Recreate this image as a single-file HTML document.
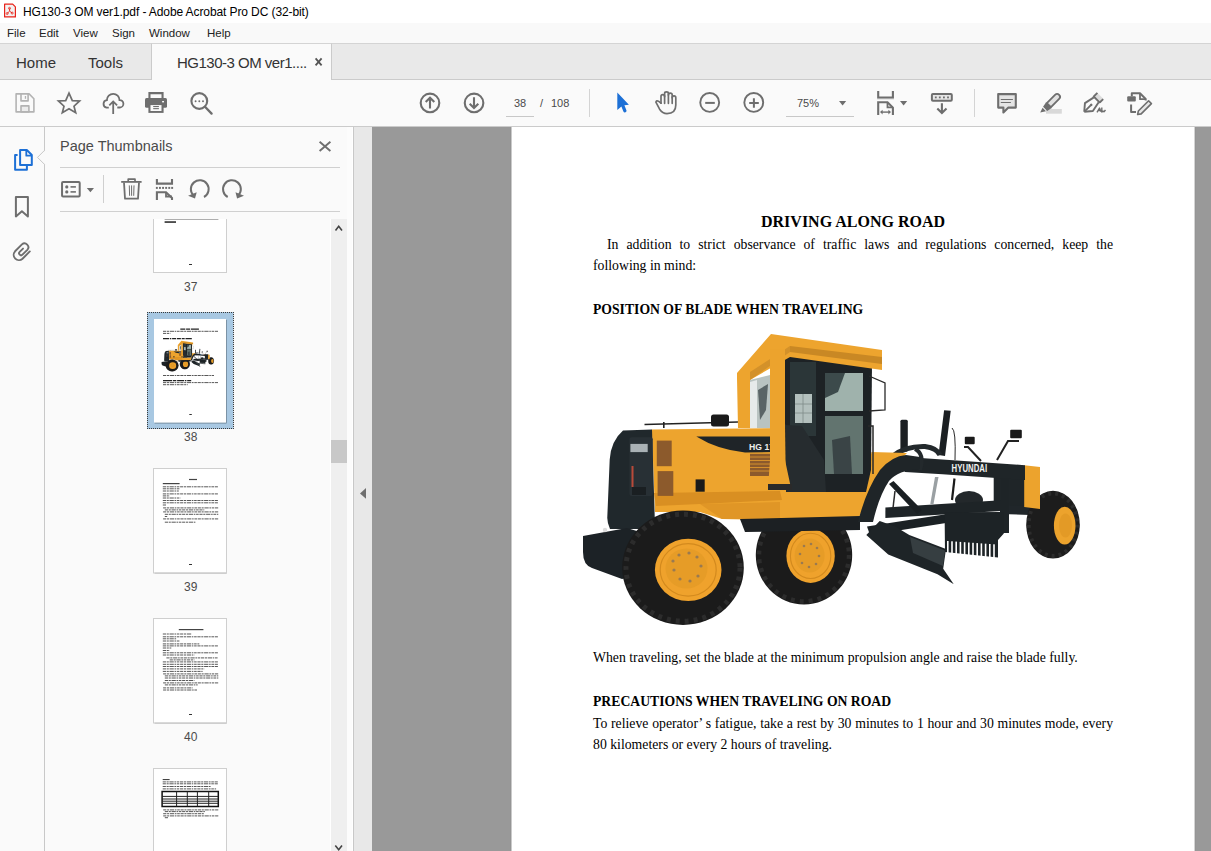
<!DOCTYPE html>
<html><head><meta charset="utf-8">
<style>
*{margin:0;padding:0;box-sizing:border-box}
html,body{width:1211px;height:851px;overflow:hidden;background:#fafafa;font-family:"Liberation Sans",sans-serif;position:relative}
.a{position:absolute}
.t{position:absolute;white-space:nowrap;line-height:1}
svg{position:absolute;overflow:visible}
#titlebar{left:0;top:0;width:1211px;height:23px;background:#fff}
#menubar{left:0;top:23px;width:1211px;height:20px;background:#f9f9f9}
#tabbar{left:0;top:43px;width:1211px;height:37px;background:#e9e9e9;border-top:1px solid #d4d4d4;border-bottom:1px solid #cbcbcb}
#activetab{left:151px;top:43px;width:181px;height:38px;background:#fafafa;border-left:1px solid #cbcbcb;border-right:1px solid #cbcbcb;border-top:1px solid #d4d4d4}
#toolbar{left:0;top:80px;width:1211px;height:46px;background:#fafafa}
#tbborder{left:0;top:126px;width:1211px;height:1px;background:#cbcbcb}
#leftnav{left:0;top:127px;width:44px;height:724px;background:#fafafa}
#navline{left:44px;top:127px;width:1px;height:724px;background:#c8c8c8}
#panel{left:45px;top:127px;width:308px;height:724px;background:#fafafa}
#panelline{left:353px;top:127px;width:1px;height:724px;background:#c8c8c8}
#collapse{left:354px;top:127px;width:18px;height:724px;background:#e8e8e8}
#docbg{left:372px;top:127px;width:839px;height:724px;background:#999}
#page{left:510px;top:127px;width:686px;height:724px;background:#fff;border-left:1px solid #959595;border-right:1px solid #959595;box-shadow:inset 1px 0 0 #cacaca, inset -1px 0 0 #d4d4d4}
.menu{font-size:11.5px;color:#222;top:28px}
.jl{font-size:13.75px;line-height:1;white-space:nowrap;text-align:justify;text-align-last:justify;height:14px;overflow:visible}
.ico{stroke:#6e6e6e;fill:none;stroke-width:2}
.doc{font-family:"Liberation Serif",serif;color:#000}
</style></head><body>
<div id="titlebar" class="a"></div>
<div id="menubar" class="a"></div>
<div id="tabbar" class="a"></div>
<div id="activetab" class="a"></div>
<div id="toolbar" class="a"></div>
<div id="tbborder" class="a"></div>
<div id="leftnav" class="a"></div>
<div id="navline" class="a"></div>
<div id="panel" class="a"></div>
<div id="panelline" class="a"></div>
<div id="collapse" class="a"></div>
<div id="docbg" class="a"></div>
<div id="page" class="a"></div>

<!-- title -->
<div class="t" style="left:23px;top:6px;font-size:12px;letter-spacing:-0.1px;color:#000">HG130-3 OM ver1.pdf - Adobe Acrobat Pro DC (32-bit)</div>
<!-- menu -->
<div class="t menu" style="left:7px">File</div>
<div class="t menu" style="left:39px">Edit</div>
<div class="t menu" style="left:73px">View</div>
<div class="t menu" style="left:112px">Sign</div>
<div class="t menu" style="left:149px">Window</div>
<div class="t menu" style="left:207px">Help</div>
<!-- tabs -->
<div class="t" style="left:16px;top:55px;font-size:15px;color:#333">Home</div>
<div class="t" style="left:88px;top:55px;font-size:15px;color:#333">Tools</div>
<div class="t" style="left:177px;top:55px;font-size:15px;letter-spacing:-0.5px;color:#333">HG130-3 OM ver1....</div>


<!-- toolbar text -->
<div class="t" style="left:514px;top:98px;font-size:11px;color:#4a4a4a">38</div>
<div class="t" style="left:540px;top:98px;font-size:11px;color:#4a4a4a">/</div>
<div class="t" style="left:551px;top:98px;font-size:11px;color:#4a4a4a">108</div>
<div class="t" style="left:797px;top:98px;font-size:11px;color:#4a4a4a">75%</div>
<!-- panel header -->
<div class="t" style="left:60px;top:139px;font-size:14.5px;color:#4b4b4b">Page Thumbnails</div>
<div class="a" style="left:60px;top:167px;width:280px;height:1px;background:#d0d0d0"></div>
<div class="a" style="left:60px;top:211px;width:280px;height:1px;background:#d0d0d0"></div>
<div class="a" style="left:103px;top:175px;width:1px;height:28px;background:#cfcfcf"></div>
<!-- thumbs scrollbar -->
<div class="a" style="left:330px;top:219px;width:1px;height:632px;background:#fff"></div>
<div class="a" style="left:347px;top:127px;width:6px;height:724px;background:#fcfcfc"></div>
<div class="a" style="left:352px;top:127px;width:1px;height:724px;background:#fff"></div>
<div class="a" style="left:331px;top:219px;width:16px;height:632px;background:#efefef"></div>
<div class="a" style="left:331px;top:440px;width:16px;height:23px;background:#c8c8c8"></div>


<!-- grader -->
<svg width="1211" height="851" style="left:0;top:0" viewBox="0 0 1211 851">
<g id="grader">
 <!-- front axle / drawbar pieces behind -->
 <ellipse cx="969" cy="500" rx="14" ry="9" fill="#23282b"/>
 <path d="M1000,503 L1030,505 L1030,515 L1000,514 Z" fill="#20262a"/>
 <!-- front tire -->
 <ellipse cx="1053" cy="524.7" rx="26.8" ry="33.9" fill="#1c1c1c"/>
 <ellipse cx="1053" cy="524.7" rx="24.3" ry="31.2" fill="none" stroke="#2c2c2c" stroke-width="4" stroke-dasharray="3,4"/>
 <ellipse cx="1064.7" cy="525.6" rx="10.8" ry="18.9" fill="#eca32d"/>
 <ellipse cx="1065.5" cy="525.6" rx="6.5" ry="12" fill="#e39a26"/>
 <!-- front frame black box -->
 <path d="M993.7,465 L1025,465.2 L1025,505.7 L993.7,505 Z" fill="#1f2528"/>
 <!-- orange front block -->
 <path d="M1024.2,465.2 L1040,467 L1040,509 L1024.2,507 Z" fill="#eca32d"/>
 <!-- beam -->
 <path d="M895,455 L906.2,457 L1025,465.2 L1025,480 L942.5,474.3 L905,472 Z" fill="#1f2528"/>
 <!-- lift cylinders -->
 <rect x="900.4" y="419.8" width="7.4" height="32" rx="1.5" fill="#1b1f22"/>
 <path d="M944.1,410.2 L950.7,410.8 L945,456 L938.5,455 Z" fill="#1b1f22"/>
 <path d="M952,428 Q956,430 955,460" stroke="#2a2a2a" stroke-width="1" fill="none"/>
 <!-- hoses -->
 <path d="M893,456 Q905,446 925,446.5 Q937,448 940,455" stroke="#23292c" stroke-width="5" fill="none"/>
 <path d="M915,449 Q925,454 920,470" stroke="#23292c" stroke-width="4" fill="none"/>
 <!-- lights -->
 <path d="M964,447 H968 L981,461" stroke="#222" stroke-width="2" fill="none"/>
 <rect x="964.8" y="436.7" width="9.9" height="7.5" rx="1" fill="#1a1a1a"/>
 <path d="M1019,441 H1008 L997,460" stroke="#222" stroke-width="2" fill="none"/>
 <rect x="1010.2" y="429.7" width="11.6" height="8.5" rx="1" fill="#1a1a1a"/>
 <!-- HYUNDAI -->
 <text x="951.6" y="472" font-family="Liberation Sans" font-weight="bold" font-size="11.8" fill="#f2f2f2" textLength="35.5" lengthAdjust="spacingAndGlyphs">HYUNDAI</text>
 <!-- circle / drawbar assembly -->
 <path d="M885.4,507.4 L1001,500.3 L1001,511 L885.4,518 Z" fill="#1e2427"/>
 <path d="M867,526.4 L958.7,512.3 L958.7,521 L870,535 Z" fill="#1b2124"/>
 <rect x="1001" y="478" width="8" height="55" fill="#1e2427"/>
 <path d="M954.5,478.5 L952,500" stroke="#1a1a1a" stroke-width="2.2"/>
 <path d="M895,491 L893,508" stroke="#2a2a2a" stroke-width="1.5"/>
 <path d="M889,484 L893.5,481 L922,510 L917,514 Z" fill="#1a1f22"/>
 <path d="M935,477 L938.5,477 L933.5,504 L930.3,504 Z" fill="#9aa0a3"/>
 <!-- ripper/scarifier -->
 <path d="M944.6,512.3 L1003.8,512 L1003.8,533.4 L998,540 L998,557.4 L945,552 Z" fill="#1d2326"/>
 <g fill="#fff"><rect x="947.0" y="541.0" width="1.6" height="14.0"/><rect x="951.2" y="541.3" width="1.6" height="14.2"/><rect x="955.4" y="541.6" width="1.6" height="14.4"/><rect x="959.6" y="541.9" width="1.6" height="14.6"/><rect x="963.8" y="542.2" width="1.6" height="14.8"/><rect x="968.0" y="542.5" width="1.6" height="15.0"/><rect x="972.2" y="542.8" width="1.6" height="15.2"/><rect x="976.4" y="543.1" width="1.6" height="15.4"/><rect x="980.6" y="543.4" width="1.6" height="15.6"/><rect x="984.8" y="543.7" width="1.6" height="15.8"/><rect x="989.0" y="544.0" width="1.6" height="16.0"/><rect x="993.2" y="544.3" width="1.6" height="16.2"/></g>
 <!-- blade -->
 <path d="M866.3,534.9 L879.7,521 L895.2,526.4 L909.3,534.9 L946,549 L943.2,568.7 L953.8,584.2 L937.5,574.3 L888.2,554.6 Z" fill="#1e2427"/>
 <path d="M910,537 L945,550.5 L943,566 L913,553 Z" fill="#363e41"/>
 <!-- middle tire -->
 <ellipse cx="804" cy="555" rx="48.2" ry="49.6" fill="#1b1b1b"/>
 <ellipse cx="804" cy="555" rx="45" ry="46.4" fill="none" stroke="#2c2c2c" stroke-width="4.5" stroke-dasharray="4,5"/>
 <ellipse cx="810.6" cy="555.9" rx="24.2" ry="27" fill="#efa22c"/>
 <ellipse cx="810.6" cy="555.9" rx="20.2" ry="22.6" fill="none" stroke="#d38a1e" stroke-width="1.1"/>
 <ellipse cx="809.6" cy="555.5" rx="15" ry="17" fill="#e69c27"/>
 <g fill="#9a7a50"><circle cx="804" cy="546" r="1.3"/><circle cx="811" cy="544" r="1.3"/><circle cx="817" cy="548" r="1.3"/><circle cx="819" cy="556" r="1.3"/><circle cx="816" cy="564" r="1.3"/><circle cx="809" cy="567" r="1.3"/><circle cx="802" cy="563" r="1.3"/><circle cx="800" cy="554" r="1.3"/></g>
 <!-- orange body -->
 <path d="M651.8,429.5 L740,428.5 L790,428 L790,491.5 L865,491 L863.2,492.5 L871.5,452 L907,453 L900,460 L882,480 L870,495 L858,519 L745,519.5 L722,519 L700,512 L655,512 Z" fill="#eda42e"/>
 <path d="M654,493 L780,491 L782,500 L740,502 L700,504 L656,506 Z" fill="#d98f22"/>
 <path d="M700,504 L722,519 L780,519 L780,502 Z" fill="#e09626"/>
 <!-- black lower band between wheels -->
 <path d="M740,519 L860,516 L860,530 L745,532 Z" fill="#1c2023"/>
 <!-- arch of front frame -->
 <path d="M858,522 Q866,490 880,470 Q892,456 906,455 L920,457 L920,469 Q898,470 889,481 Q879,496 873,522 Z" fill="#1f2528"/>
 <!-- rear black cover -->
 <path d="M623,430.6 L652,429.5 L655,526 L640,529 L610,529 Q607,522 607.3,517 L609.7,459.5 Q611,441 623,430.6 Z" fill="#20282c"/>
 <rect x="629.5" y="437.3" width="23.2" height="58.6" rx="2" fill="#283035"/>
 <rect x="630.4" y="443.9" width="17.3" height="8.2" fill="#a9b1b5"/>
 <rect x="631.5" y="466" width="2" height="21" fill="#b84a3a"/>
 <rect x="632" y="487" width="14" height="8" fill="#1a1f22"/>
 <!-- bumper -->
 <path d="M583,536 L627,528 L640,532 L640,575 L622,579 L592,568 Q583,565 583,552 Z" fill="#1c2226"/>
 <circle cx="605" cy="530" r="2.2" fill="#ddd"/>
 <!-- rear tire -->
 <ellipse cx="683" cy="567.7" rx="60.8" ry="57.2" fill="#1b1b1b"/>
 <ellipse cx="683" cy="567.7" rx="57" ry="53.5" fill="none" stroke="#2c2c2c" stroke-width="5" stroke-dasharray="4,5"/>
 <ellipse cx="688.2" cy="569.9" rx="33.3" ry="31.2" fill="#efa22c"/>
 <ellipse cx="688.2" cy="569.9" rx="28" ry="26.2" fill="none" stroke="#d38a1e" stroke-width="1.2"/>
 <ellipse cx="686.5" cy="568.5" rx="21" ry="20" fill="#e69c27"/>
 <g fill="#9a7a50"><circle cx="679" cy="555" r="1.6"/><circle cx="689" cy="553" r="1.6"/><circle cx="697" cy="557" r="1.6"/><circle cx="701" cy="566" r="1.6"/><circle cx="698" cy="576" r="1.6"/><circle cx="690" cy="581" r="1.6"/><circle cx="680" cy="579" r="1.6"/><circle cx="674" cy="570" r="1.6"/><circle cx="673" cy="561" r="1.6"/></g>
 <!-- hood stripe -->
 <path d="M696.3,436.6 L774,436.5 L774,452 L745,452.5 Q718,450 696.3,436.6 Z" fill="#1f2428"/>
 <text x="749" y="449.5" font-family="Liberation Sans" font-weight="bold" font-size="9" fill="#eee" textLength="25" lengthAdjust="spacingAndGlyphs">HG 17</text>
 <!-- vents -->
 <rect x="656.8" y="440.6" width="14.9" height="25.6" fill="#8c5a2c"/>
 <rect x="657.6" y="471.1" width="15.7" height="24.8" fill="#8c5a2c"/>
 <rect x="750" y="453.8" width="24" height="22.2" fill="#8c5a2c"/>
 <path d="M750,457 H774 M750,460.5 H774 M750,464 H774 M750,467.5 H774 M750,471 H774" stroke="#d48f2c" stroke-width="1"/>
 <rect x="695.6" y="479.4" width="9.1" height="12.3" fill="#1a1a1a"/>
 <!-- handrail + exhaust -->
 <path d="M644.5,424.5 L738,422" stroke="#222" stroke-width="1.6" fill="none"/>
 <rect x="663" y="422" width="1.6" height="6" fill="#222"/>
 <rect x="711" y="414.5" width="18" height="12" rx="2.5" fill="#1a1a1a"/>
 <!-- cab black -->
 <path d="M784,352 L872,364 L871,470 L866,492 L786,492 Z" fill="#1d2225"/>
 <rect x="790" y="362" width="26" height="74" fill="#2b3638"/>
 <rect x="795" y="394" width="17" height="29" fill="#b3c0bd"/>
 <path d="M795,404 H812 M795,413 H812 M803,394 V423" stroke="#7d8a88" stroke-width="0.8"/>
 <rect x="825" y="373" width="38" height="38" fill="#9fb2ac"/>
 <path d="M825,373 L845,373 L838,392 L825,398 Z" fill="#3c4a4b"/>
 <rect x="825" y="416" width="38" height="58" fill="#62746f"/>
 <path d="M832,440 L850,436 L852,474 L834,474 Z" fill="#3a4446"/>
 <path d="M786,425 L802,426 L824,460 L826,492 L786,492 Z" fill="#262c2f"/>
 <!-- side window -->
 <path d="M750,380 L770,375 L770,428 L750,428 Z" fill="#b9c3c1"/>
 <path d="M750,382 L757,380 L757,428 L750,428 Z" fill="#e6eaea"/>
 <path d="M758,390 L768,384 L766,410 L760,420 Z" fill="#5a6466"/>
 <!-- mirror -->
 <path d="M869,376 L885,383 L885,410 L869,411" stroke="#2a2a2a" stroke-width="1.3" fill="none"/>
 <path d="M868,426 H873 V474" stroke="#2a2a2a" stroke-width="1.5" fill="none"/>
 <!-- orange roof and pillars -->
 <path d="M737,373 L771,334 L882,350 L882,370 L790,357 L750,380 L750,428 L738,428 L737,378 Z" fill="#eda42e"/>
 <path d="M790,346 L882,357 L882,364 L790,352 Z" fill="#c98824"/>
 <path d="M750,372 L790,346 L790,352 L750,380 Z" fill="#d3912a"/>
 <path d="M770,349 L785,349 L785,460 L791,488 L768,488 L770,460 Z" fill="#eca32d"/>
 <path d="M768,484 L792,484 L792,490 L768,490 Z" fill="#2a2a2a"/>
</g>
</svg>

<!-- thumbnails -->
<div class="a" style="left:45px;top:219px;width:286px;height:632px;overflow:hidden">
<svg width="286" height="632" style="left:0;top:0" viewBox="45 219 286 632">
 <defs><filter id="sh" x="-10%" y="-10%" width="130%" height="130%"><feDropShadow dx="0.6" dy="0.8" stdDeviation="0.7" flood-color="#000" flood-opacity="0.45"/></filter></defs>
 <!-- 37 -->
 <rect x="154" y="168" width="72" height="104" fill="#fff" filter="url(#sh)"/>
 <rect x="153.5" y="167.5" width="73" height="105.0" fill="none" stroke="#cfcfcf" stroke-width="1"/>
 <rect x="164.6" y="219.2" width="53.8" height="0.8" fill="#9a9a9a"/>
 <rect x="164.6" y="221.3" width="11.4" height="1.5" fill="#222"/>
 <rect x="189" y="264" width="3" height="1" fill="#333"/>
 <!-- 38 selected -->
 <rect x="147" y="312" width="86.5" height="117" fill="#a8c8e2"/>
 <rect x="154" y="319" width="72" height="103.5" fill="#fff" filter="url(#sh)"/>
 <path d="M180.3,329.1 h19" stroke="#222" stroke-width="1.2" stroke-dasharray="5,0.8,4,0.8,8"/>
 <path d="M163.0,331.30 h55.0" stroke="#3c3c3c" stroke-width="1" stroke-dasharray="3.2,0.7,2.1,0.7,4.3,0.7,1.6,0.7,2.6,0.7" opacity="0.85"/>
 <path d="M163.0,333.40 h7.4" stroke="#3c3c3c" stroke-width="1" stroke-dasharray="3.2,0.7,2.1,0.7,4.3,0.7,1.6,0.7,2.6,0.7" opacity="0.85"/>
 <path d="M163,338.6 h28.8" stroke="#222" stroke-width="1.2" stroke-dasharray="6,0.8,1.5,0.8,4,0.8,4,0.8,3,0.8,7"/>
 <path d="M163.0,375.50 h51.0" stroke="#3c3c3c" stroke-width="1" stroke-dasharray="3.2,0.7,2.1,0.7,4.3,0.7,1.6,0.7,2.6,0.7" opacity="0.85"/>
 <path d="M163,380.6 h31.3" stroke="#222" stroke-width="1.2" stroke-dasharray="9,0.8,3.5,0.8,7,0.8,1.5,0.8,4"/>
 <path d="M163.0,382.60 h55.0" stroke="#3c3c3c" stroke-width="1" stroke-dasharray="3.2,0.7,2.1,0.7,4.3,0.7,1.6,0.7,2.6,0.7" opacity="0.85"/>
 <path d="M163.0,384.70 h24.7" stroke="#3c3c3c" stroke-width="1" stroke-dasharray="3.2,0.7,2.1,0.7,4.3,0.7,1.6,0.7,2.6,0.7" opacity="0.85"/>
 <rect x="189.3" y="414" width="2.5" height="1" fill="#333"/>
 <use href="#grader" transform="translate(154,319) scale(0.1053) translate(-511,-127)"/>
 <!-- 39 -->
 <rect x="154" y="469" width="72" height="103.5" fill="#fff" filter="url(#sh)"/>
 <rect x="153.5" y="468.5" width="73" height="104.5" fill="none" stroke="#cfcfcf" stroke-width="1"/>
 <rect x="189" y="478.9" width="8" height="1.2" fill="#444"/>
 <rect x="162.8" y="483" width="16.8" height="1.2" fill="#444"/>
 <path d="M162.8,486.80 h55.5" stroke="#3c3c3c" stroke-width="1" stroke-dasharray="3.2,0.7,2.1,0.7,4.3,0.7,1.6,0.7,2.6,0.7" opacity="0.85"/>
<path d="M162.8,488.80 h16.8" stroke="#3c3c3c" stroke-width="1" stroke-dasharray="3.2,0.7,2.1,0.7,4.3,0.7,1.6,0.7,2.6,0.7" opacity="0.85"/>
<path d="M162.8,491.00 h16.0" stroke="#3c3c3c" stroke-width="1" stroke-dasharray="3.2,0.7,2.1,0.7,4.3,0.7,1.6,0.7,2.6,0.7" opacity="0.85"/>
<path d="M162.8,493.90 h55.5" stroke="#3c3c3c" stroke-width="1" stroke-dasharray="3.2,0.7,2.1,0.7,4.3,0.7,1.6,0.7,2.6,0.7" opacity="0.85"/>
<path d="M162.8,495.90 h6.9" stroke="#3c3c3c" stroke-width="1" stroke-dasharray="3.2,0.7,2.1,0.7,4.3,0.7,1.6,0.7,2.6,0.7" opacity="0.85"/>
<path d="M162.8,498.00 h17.6" stroke="#3c3c3c" stroke-width="1" stroke-dasharray="3.2,0.7,2.1,0.7,4.3,0.7,1.6,0.7,2.6,0.7" opacity="0.85"/>
<path d="M162.8,500.50 h55.5" stroke="#3c3c3c" stroke-width="1" stroke-dasharray="3.2,0.7,2.1,0.7,4.3,0.7,1.6,0.7,2.6,0.7" opacity="0.85"/>
<path d="M162.8,502.80 h55.5" stroke="#3c3c3c" stroke-width="1" stroke-dasharray="3.2,0.7,2.1,0.7,4.3,0.7,1.6,0.7,2.6,0.7" opacity="0.85"/>
<path d="M162.8,505.00 h3.6" stroke="#3c3c3c" stroke-width="1" stroke-dasharray="3.2,0.7,2.1,0.7,4.3,0.7,1.6,0.7,2.6,0.7" opacity="0.85"/>
<path d="M163.1,507.90 h55.2" stroke="#3c3c3c" stroke-width="1" stroke-dasharray="3.2,0.7,2.1,0.7,4.3,0.7,1.6,0.7,2.6,0.7" opacity="0.85"/>
<path d="M164.8,509.90 h39.5" stroke="#3c3c3c" stroke-width="1" stroke-dasharray="3.2,0.7,2.1,0.7,4.3,0.7,1.6,0.7,2.6,0.7" opacity="0.85"/>
<path d="M163.1,511.90 h55.2" stroke="#3c3c3c" stroke-width="1" stroke-dasharray="3.2,0.7,2.1,0.7,4.3,0.7,1.6,0.7,2.6,0.7" opacity="0.85"/>
<path d="M164.8,514.30 h53.5" stroke="#3c3c3c" stroke-width="1" stroke-dasharray="3.2,0.7,2.1,0.7,4.3,0.7,1.6,0.7,2.6,0.7" opacity="0.85"/>
<path d="M164.8,516.50 h2.4" stroke="#3c3c3c" stroke-width="1" stroke-dasharray="3.2,0.7,2.1,0.7,4.3,0.7,1.6,0.7,2.6,0.7" opacity="0.85"/>
<path d="M163.1,518.90 h55.2" stroke="#3c3c3c" stroke-width="1" stroke-dasharray="3.2,0.7,2.1,0.7,4.3,0.7,1.6,0.7,2.6,0.7" opacity="0.85"/>
<path d="M164.8,522.20 h31.2" stroke="#3c3c3c" stroke-width="1" stroke-dasharray="3.2,0.7,2.1,0.7,4.3,0.7,1.6,0.7,2.6,0.7" opacity="0.85"/>
 <rect x="189" y="564" width="3" height="1" fill="#333"/>
 <!-- 40 -->
 <rect x="154" y="619" width="72" height="103.5" fill="#fff" filter="url(#sh)"/>
 <rect x="153.5" y="618.5" width="73" height="104.5" fill="none" stroke="#cfcfcf" stroke-width="1"/>
 <rect x="178.8" y="629" width="24.6" height="1.2" fill="#444"/>
 <path d="M162.8,634.00 h29.1" stroke="#3c3c3c" stroke-width="1" stroke-dasharray="3.2,0.7,2.1,0.7,4.3,0.7,1.6,0.7,2.6,0.7" opacity="0.85"/>
<path d="M162.8,636.80 h55.5" stroke="#3c3c3c" stroke-width="1" stroke-dasharray="3.2,0.7,2.1,0.7,4.3,0.7,1.6,0.7,2.6,0.7" opacity="0.85"/>
<path d="M162.8,638.80 h13.5" stroke="#3c3c3c" stroke-width="1" stroke-dasharray="3.2,0.7,2.1,0.7,4.3,0.7,1.6,0.7,2.6,0.7" opacity="0.85"/>
<path d="M162.8,641.00 h16.8" stroke="#3c3c3c" stroke-width="1" stroke-dasharray="3.2,0.7,2.1,0.7,4.3,0.7,1.6,0.7,2.6,0.7" opacity="0.85"/>
<path d="M162.8,643.90 h36.5" stroke="#3c3c3c" stroke-width="1" stroke-dasharray="3.2,0.7,2.1,0.7,4.3,0.7,1.6,0.7,2.6,0.7" opacity="0.85"/>
<path d="M162.8,645.90 h55.5" stroke="#3c3c3c" stroke-width="1" stroke-dasharray="3.2,0.7,2.1,0.7,4.3,0.7,1.6,0.7,2.6,0.7" opacity="0.85"/>
<path d="M162.8,648.00 h8.5" stroke="#3c3c3c" stroke-width="1" stroke-dasharray="3.2,0.7,2.1,0.7,4.3,0.7,1.6,0.7,2.6,0.7" opacity="0.85"/>
<path d="M162.8,650.50 h6.9" stroke="#3c3c3c" stroke-width="1" stroke-dasharray="3.2,0.7,2.1,0.7,4.3,0.7,1.6,0.7,2.6,0.7" opacity="0.85"/>
<path d="M162.8,652.80 h55.5" stroke="#3c3c3c" stroke-width="1" stroke-dasharray="3.2,0.7,2.1,0.7,4.3,0.7,1.6,0.7,2.6,0.7" opacity="0.85"/>
<path d="M162.8,655.00 h31.6" stroke="#3c3c3c" stroke-width="1" stroke-dasharray="3.2,0.7,2.1,0.7,4.3,0.7,1.6,0.7,2.6,0.7" opacity="0.85"/>
<path d="M166.4,657.90 h51.9" stroke="#3c3c3c" stroke-width="1" stroke-dasharray="3.2,0.7,2.1,0.7,4.3,0.7,1.6,0.7,2.6,0.7" opacity="0.85"/>
<path d="M169.7,659.90 h24.7" stroke="#3c3c3c" stroke-width="1" stroke-dasharray="3.2,0.7,2.1,0.7,4.3,0.7,1.6,0.7,2.6,0.7" opacity="0.85"/>
<path d="M162.8,661.90 h55.5" stroke="#3c3c3c" stroke-width="1" stroke-dasharray="3.2,0.7,2.1,0.7,4.3,0.7,1.6,0.7,2.6,0.7" opacity="0.85"/>
<path d="M162.8,664.30 h55.5" stroke="#3c3c3c" stroke-width="1" stroke-dasharray="3.2,0.7,2.1,0.7,4.3,0.7,1.6,0.7,2.6,0.7" opacity="0.85"/>
<path d="M162.8,666.50 h55.5" stroke="#3c3c3c" stroke-width="1" stroke-dasharray="3.2,0.7,2.1,0.7,4.3,0.7,1.6,0.7,2.6,0.7" opacity="0.85"/>
<path d="M162.8,668.90 h41.5" stroke="#3c3c3c" stroke-width="1" stroke-dasharray="3.2,0.7,2.1,0.7,4.3,0.7,1.6,0.7,2.6,0.7" opacity="0.85"/>
<path d="M162.8,671.40 h39.8" stroke="#3c3c3c" stroke-width="1" stroke-dasharray="3.2,0.7,2.1,0.7,4.3,0.7,1.6,0.7,2.6,0.7" opacity="0.85"/>
<path d="M163.1,673.90 h55.2" stroke="#3c3c3c" stroke-width="1" stroke-dasharray="3.2,0.7,2.1,0.7,4.3,0.7,1.6,0.7,2.6,0.7" opacity="0.85"/>
<path d="M164.8,675.90 h53.5" stroke="#3c3c3c" stroke-width="1" stroke-dasharray="3.2,0.7,2.1,0.7,4.3,0.7,1.6,0.7,2.6,0.7" opacity="0.85"/>
<path d="M164.8,678.00 h53.5" stroke="#3c3c3c" stroke-width="1" stroke-dasharray="3.2,0.7,2.1,0.7,4.3,0.7,1.6,0.7,2.6,0.7" opacity="0.85"/>
<path d="M164.8,680.50 h29.6" stroke="#3c3c3c" stroke-width="1" stroke-dasharray="3.2,0.7,2.1,0.7,4.3,0.7,1.6,0.7,2.6,0.7" opacity="0.85"/>
<path d="M163.1,682.90 h55.2" stroke="#3c3c3c" stroke-width="1" stroke-dasharray="3.2,0.7,2.1,0.7,4.3,0.7,1.6,0.7,2.6,0.7" opacity="0.85"/>
<path d="M164.8,684.90 h32.9" stroke="#3c3c3c" stroke-width="1" stroke-dasharray="3.2,0.7,2.1,0.7,4.3,0.7,1.6,0.7,2.6,0.7" opacity="0.85"/>
<path d="M163.1,687.90 h29.6" stroke="#3c3c3c" stroke-width="1" stroke-dasharray="3.2,0.7,2.1,0.7,4.3,0.7,1.6,0.7,2.6,0.7" opacity="0.85"/>
<path d="M163.1,690.00 h34.6" stroke="#3c3c3c" stroke-width="1" stroke-dasharray="3.2,0.7,2.1,0.7,4.3,0.7,1.6,0.7,2.6,0.7" opacity="0.85"/>
 <rect x="189" y="714" width="3" height="1" fill="#333"/>
 <!-- 41 -->
 <rect x="154" y="769" width="72" height="104" fill="#fff" filter="url(#sh)"/>
 <rect x="153.5" y="768.5" width="73" height="105.0" fill="none" stroke="#cfcfcf" stroke-width="1"/>
 <rect x="162.7" y="779" width="6.9" height="1.1" fill="#444"/>
 <path d="M162.7,781.90 h55.6" stroke="#3c3c3c" stroke-width="1" stroke-dasharray="3.2,0.7,2.1,0.7,4.3,0.7,1.6,0.7,2.6,0.7" opacity="0.85"/>
<path d="M162.7,783.80 h55.6" stroke="#3c3c3c" stroke-width="1" stroke-dasharray="3.2,0.7,2.1,0.7,4.3,0.7,1.6,0.7,2.6,0.7" opacity="0.85"/>
<path d="M162.7,786.50 h48.6" stroke="#3c3c3c" stroke-width="1" stroke-dasharray="3.2,0.7,2.1,0.7,4.3,0.7,1.6,0.7,2.6,0.7" opacity="0.85"/>
<path d="M162.7,788.90 h53.4" stroke="#3c3c3c" stroke-width="1" stroke-dasharray="3.2,0.7,2.1,0.7,4.3,0.7,1.6,0.7,2.6,0.7" opacity="0.85"/>
<path d="M163.2,809.90 h55.1" stroke="#3c3c3c" stroke-width="1" stroke-dasharray="3.2,0.7,2.1,0.7,4.3,0.7,1.6,0.7,2.6,0.7" opacity="0.85"/>
<path d="M164.8,811.60 h40.1" stroke="#3c3c3c" stroke-width="1" stroke-dasharray="3.2,0.7,2.1,0.7,4.3,0.7,1.6,0.7,2.6,0.7" opacity="0.85"/>
<path d="M163.2,813.70 h41.2" stroke="#3c3c3c" stroke-width="1" stroke-dasharray="3.2,0.7,2.1,0.7,4.3,0.7,1.6,0.7,2.6,0.7" opacity="0.85"/>
<path d="M163.2,815.90 h55.1" stroke="#3c3c3c" stroke-width="1" stroke-dasharray="3.2,0.7,2.1,0.7,4.3,0.7,1.6,0.7,2.6,0.7" opacity="0.85"/>
<path d="M164.8,817.70 h3.2" stroke="#3c3c3c" stroke-width="1" stroke-dasharray="3.2,0.7,2.1,0.7,4.3,0.7,1.6,0.7,2.6,0.7" opacity="0.85"/>
 <rect x="162.1" y="791.5" width="56.2" height="15" fill="none" stroke="#111" stroke-width="1.5"/>
 <path d="M176.6,791.5 V806.5 M187.3,791.5 V806.5 M197.4,791.5 V806.5 M208.7,791.5 V806.5 M162,796.4 H218.3 M162,799 H218.3 M162,801.2 H218.3 M162,803.3 H218.3" stroke="#222" stroke-width="1"/>
</svg>
</div>

<div class="a" style="left:147px;top:312px;width:87px;height:117px;border:1px dotted #3a3a3a"></div>
<!-- thumb labels -->
<div class="t" style="left:184px;top:281px;font-size:12px;color:#4b4b4b">37</div>
<div class="t" style="left:184px;top:431px;font-size:12px;color:#4b4b4b">38</div>
<div class="t" style="left:184px;top:581px;font-size:12px;color:#4b4b4b">39</div>
<div class="t" style="left:184px;top:731px;font-size:12px;color:#4b4b4b">40</div>

<!-- doc text -->
<div class="t doc" style="left:761px;top:214px;font-size:16px;font-weight:bold">DRIVING ALONG ROAD</div>
<div class="a doc jl" style="left:607px;top:238px;width:506px">In addition to strict observance of traffic laws and regulations concerned, keep the</div>
<div class="t doc" style="left:593px;top:259px;font-size:13.75px">following in mind:</div>
<div class="t doc" style="left:593px;top:303px;font-size:13.7px;font-weight:bold">POSITION OF BLADE WHEN TRAVELING</div>
<div class="t doc" style="left:593px;top:651px;font-size:13.75px">When traveling, set the blade at the minimum propulsion angle and raise the blade fully.</div>
<div class="t doc" style="left:593px;top:695px;font-size:13.7px;font-weight:bold">PRECAUTIONS WHEN TRAVELING ON ROAD</div>
<div class="a doc jl" style="left:593px;top:717px;width:520px">To relieve operator’ s fatigue, take a rest by 30 minutes to 1 hour and 30 minutes mode, every</div>
<div class="t doc" style="left:593px;top:738px;font-size:13.75px">80 kilometers or every 2 hours of traveling.</div>

<!-- icons overlay -->
<svg width="1211" height="851" style="left:0;top:0" viewBox="0 0 1211 851">
 <!-- title pdf icon -->
 <path d="M4.6,4.2 H12.7 L15.4,6.9 V16.9 H4.6 Z" fill="#f2f2f2" stroke="#e8231a" stroke-width="1.2" stroke-linejoin="round"/>
 <path d="M9.6,8.3 L9.6,11.2 M9.6,11.2 L7.2,13.4 M9.6,11.2 L12.2,13" stroke="#e8231a" stroke-width="0.9" fill="none"/>
 <circle cx="9.5" cy="8.3" r="1" fill="none" stroke="#e8231a" stroke-width="0.8"/>
 <circle cx="7.2" cy="13.5" r="1" fill="none" stroke="#e8231a" stroke-width="0.8"/>
 <circle cx="12.2" cy="13.1" r="1" fill="none" stroke="#e8231a" stroke-width="0.8"/>
 <!-- tab close -->
 <path d="M315.6,58.3 L321.6,65.3 M321.6,58.3 L315.6,65.3" stroke="#555" stroke-width="1.8"/>

 <!-- save -->
 <g stroke="#b3b3b3" stroke-width="1.6" fill="none" stroke-linejoin="round">
  <path d="M16.1,93.9 H29.1 L33.9,98.7 V111.9 H16.1 Z"/>
  <path d="M21,94 V100.9 H28.1 V94"/>
  <rect x="21" y="105.9" width="7.9" height="6" fill="#ececec"/>
 </g>
 <rect x="24.8" y="96" width="1.3" height="2.8" fill="#b3b3b3"/>
 <!-- star -->
 <path d="M69,93.1 L72.3,100.6 L79.6,100.9 L74,106.2 L75.7,112.8 L69,108.8 L62.3,112.8 L64,106.2 L58.4,100.9 L65.7,100.6 Z" fill="none" stroke="#6e6e6e" stroke-width="1.7" stroke-linejoin="miter"/>
 <!-- upload cloud -->
 <g stroke="#6e6e6e" stroke-width="1.8" fill="none">
  <path d="M108.8,107.6 H106.6 A3.8,3.8 0 0 1 106.9,100.1 A6.3,6.3 0 0 1 119.5,100.1 A3.7,3.7 0 0 1 119.9,107.5 H117.3"/>
  <path d="M113.2,113.9 V101.5 M109.3,105.3 L113.2,101.4 L117.1,105.3"/>
 </g>
 <!-- print -->
 <g fill="#6e6e6e">
  <path d="M148.4,92.1 H163.6 V99 H161.5 V94.2 H150.5 V99 H148.4 Z"/>
  <rect x="145" y="98" width="22" height="9.7" rx="1.5"/>
  <path d="M148.4,104 H163.6 V112.9 H148.4 Z"/>
 </g>
 <rect x="150.5" y="105.1" width="11" height="5.9" fill="#fafafa"/>
 <rect x="153.2" y="106" width="5.7" height="1.1" fill="#6e6e6e"/>
 <rect x="153.2" y="108.1" width="5.7" height="1.1" fill="#6e6e6e"/>
 <rect x="162.1" y="101" width="1.9" height="1.4" fill="#fafafa"/>
 <!-- search -->
 <g stroke="#6e6e6e" fill="none">
  <circle cx="199.3" cy="101" r="7.9" stroke-width="2.1"/>
  <path d="M205,106.8 L211.6,113.6" stroke-width="2.3" stroke-linecap="round"/>
 </g>
 <g fill="#6e6e6e"><circle cx="195.6" cy="101.2" r="0.95"/><circle cx="199.3" cy="101.2" r="0.95"/><circle cx="203" cy="101.2" r="0.95"/></g>

 <!-- prev/next page -->
 <g stroke="#6e6e6e" fill="none" stroke-width="2.1">
  <circle cx="430" cy="102.95" r="9.3"/>
  <path d="M430,108.4 V97.8 M425.7,102 L430,97.7 L434.3,102"/>
  <circle cx="474.05" cy="102.95" r="9.3"/>
  <path d="M474,97.3 V108 M469.7,103.7 L474,108 L478.3,103.7"/>
 </g>
 <rect x="506" y="116" width="28" height="1" fill="#c8c8c8"/>
 <rect x="589" y="89" width="1" height="28" fill="#d4d4d4"/>
 <!-- select -->
 <path d="M617.3,92.6 L628.9,104.7 L624.4,105.2 L626.5,110.6 Q626.8,111.9 625.5,112.3 Q624,112.7 623.4,111.4 L621.4,106.5 L617.3,109.9 Z" fill="#1d70d6"/>
 <!-- hand -->
 <g stroke="#6e6e6e" stroke-width="1.7" fill="none" stroke-linejoin="round" stroke-linecap="round">
  <path d="M661,103.2 L658.7,101.4 Q656.3,99.9 655.9,102.2 L659.6,109.2 Q662.5,113.6 667,113.6 Q675.8,113.6 675.8,105 V97.8 Q675.8,95.9 674,95.9 Q672.2,95.9 672.2,97.8 V103.3"/>
  <path d="M672.2,97.8 V95 Q672.2,93.1 670.3,93.1 Q668.4,93.1 668.4,95 V103.3"/>
  <path d="M668.4,95 V93.4 Q668.4,91.9 666.5,91.9 Q664.6,91.9 664.6,93.4 V103.3"/>
  <path d="M664.6,96.4 Q664.6,94.7 662.8,94.7 Q661,94.7 661,96.4 V103.2"/>
 </g>
 <!-- zoom out / in -->
 <g stroke="#6e6e6e" fill="none" stroke-width="1.9">
  <circle cx="709.7" cy="102.4" r="9.45"/>
  <path d="M705.2,102.9 H714.8" stroke-width="2"/>
  <circle cx="753.75" cy="102.4" r="9.45"/>
  <path d="M749.2,102.9 H758.8 M753.9,98.2 V107.8" stroke-width="2"/>
 </g>
 <rect x="786" y="116" width="68" height="1" fill="#c8c8c8"/>
 <path d="M839,101 H846.2 L842.6,105.4 Z" fill="#6e6e6e"/>
 <!-- fit page -->
 <g stroke="#6e6e6e" stroke-width="2.1" fill="none">
  <path d="M878.2,91 V97.6 H892.9 V91"/>
  <path d="M878.2,114.9 V102.2 H887.5 L892.9,107.6 V114.9"/>
  <path d="M887.5,102.2 V107.3 H892.9" stroke-width="1.8"/>
  <path d="M881,112.1 H890" stroke-width="1.4"/>
 </g>
 <rect x="877" y="98.7" width="17" height="1" fill="#e0e0e0"/>
 <path d="M880,112.1 L882.6,109.7 V114.5 Z M891,112.1 L888.4,109.7 V114.5 Z" fill="#6e6e6e"/>
 <path d="M900,101 H907.2 L903.6,105.4 Z" fill="#6e6e6e"/>
 <!-- scroll mode -->
 <rect x="931.9" y="94.05" width="19.9" height="6.7" rx="1" fill="#e6e6e6" stroke="#6e6e6e" stroke-width="2"/>
 <g fill="#6e6e6e"><rect x="934.9" y="96.5" width="1.8" height="1.8"/><rect x="938.9" y="96.5" width="1.8" height="1.8"/><rect x="943" y="96.5" width="1.8" height="1.8"/><rect x="947.1" y="96.5" width="1.8" height="1.8"/></g>
 <path d="M941.9,103.2 V112.5 M937.3,108.5 L941.9,113.1 L946.5,108.5" stroke="#6e6e6e" stroke-width="2.1" fill="none"/>
 <rect x="974" y="89" width="1" height="28" fill="#d4d4d4"/>
 <!-- comment -->
 <path d="M998.2,94.1 H1015.8 V107.6 H1008.4 L1003.4,112.4 V107.6 H998.2 Z" fill="#e4e4e4" stroke="#6e6e6e" stroke-width="2.1" stroke-linejoin="round"/>
 <path d="M1000.8,99.45 H1012.9 M1000.8,102.55 H1010.9" stroke="#6e6e6e" stroke-width="1.1"/>
 <!-- highlighter -->
 <rect x="1046" y="109" width="15.8" height="4.7" fill="#d9d9d9"/>
 <g transform="translate(1051,103) rotate(45)">
  <path d="M-2.9,3 V-8.6 A2.9,2.9 0 0 1 2.9,-8.6 V3 Z" fill="#e2e2e2" stroke="#6e6e6e" stroke-width="1.8"/>
  <path d="M-3.9,3 H3.9 L2.9,8.3 H-2.9 Z" fill="#6e6e6e"/>
  <path d="M-2.6,9.3 H2.2 L-0.9,14.4 Z" fill="#6e6e6e"/>
 </g>
 <!-- sign -->
 <g transform="translate(1083.6,112.4) rotate(-45)">
  <path d="M18.4,-4.3 H23.6 V4.6 H18.4 Z" fill="#dcdcdc"/>
  <path d="M0.9,0 L7.5,-5.6 L17.9,-3.4 M0.9,0 L7.5,5.6 L17.9,3.4" fill="none" stroke="#6e6e6e" stroke-width="1.9" stroke-linejoin="round"/>
  <path d="M18.4,-4.8 V4.8 M18.4,-4.1 H23.6 M18.4,4.4 H23.3 M1.5,0 H10" fill="none" stroke="#6e6e6e" stroke-width="1.8"/>
  <circle cx="10.75" cy="0" r="1.3" fill="#6e6e6e"/>
 </g>
 <path d="M1097,112.3 L1099.5,108 L1101,111.8 M1098,110.5 H1100.5 M1101.8,107.5 V112 Q1103,110.5 1104,111.8 L1105.5,110" fill="none" stroke="#6e6e6e" stroke-width="1.4" stroke-linejoin="round"/>
 <!-- edit pdf -->
 <rect x="1127.2" y="96.3" width="8.6" height="5.2" rx="1" fill="#6e6e6e"/>
 <g stroke="#6e6e6e" stroke-width="2" fill="none" stroke-linejoin="round">
  <path d="M1131.8,96.3 V93.3 H1140 L1145.7,99 V100.5"/>
  <path d="M1140,93.3 V99.2 H1145.7" stroke-width="1.8"/>
  <path d="M1131.1,104.5 V111.9 H1136"/>
 </g>
 <g transform="translate(1144,108.2) rotate(45)">
  <path d="M-2,-8.5 H2 V6 L0,9 L-2,6 Z" fill="#e6e6e6" stroke="#6e6e6e" stroke-width="1.6" stroke-linejoin="round"/>
 </g>
</svg>

<svg width="1211" height="851" style="left:0;top:0" viewBox="0 0 1211 851">
 <!-- left nav notch -->
 <path d="M44.5,150.4 L37.5,157.4 L44.5,164.4" fill="#fafafa" stroke="#c8c8c8" stroke-width="1"/>
 <rect x="44" y="151.2" width="1.5" height="12.5" fill="#fafafa"/>
 <!-- pages icon -->
 <g stroke="#1d70d6" stroke-width="2" fill="none" stroke-linejoin="round">
  <path d="M20.1,150 H26.8 L31.8,155 V164.9 H20.1 Z"/>
  <path d="M26.3,150 V155.7 H31.8" stroke-width="1.8"/>
  <path d="M17.6,154.9 H15.1 V169.8 H26.9 V165.9"/>
 </g>
 <!-- bookmark -->
 <path d="M15.9,197.1 H27.9 V216.4 L21.9,211.3 L15.9,216.4 Z" fill="none" stroke="#6e6e6e" stroke-width="2" stroke-linejoin="round"/>
 <!-- paperclip -->
 <g transform="translate(21.6,252) rotate(-45)">
  <path d="M6.2,5.4 L-4.1,5.4 A5.27,5.27 0 0 1 -4.1,-5.13 L5.6,-5.13 A3.82,3.82 0 0 1 5.6,2.5 L-1.3,2.5 A1.95,1.95 0 0 1 -1.3,-1.4 L3.4,-1.4" fill="none" stroke="#6e6e6e" stroke-width="1.9" stroke-linecap="round"/>
 </g>
 <!-- panel close -->
 <path d="M319.6,141.8 L330.4,151 M330.4,141.8 L319.6,151" stroke="#6e6e6e" stroke-width="1.9"/>
 <!-- options -->
 <rect x="62.05" y="182.1" width="17.65" height="14.5" rx="1" fill="none" stroke="#6e6e6e" stroke-width="2"/>
 <g fill="#6e6e6e"><circle cx="66.8" cy="186.9" r="1.6"/><circle cx="66.8" cy="191.9" r="1.6"/>
 <rect x="70.5" y="186.1" width="5.4" height="1.6"/><rect x="70.5" y="191.1" width="5.4" height="1.6"/>
 <path d="M86.8,188 H94 L90.4,192.2 Z"/></g>
 <!-- trash -->
 <g stroke="#6e6e6e" fill="none" stroke-linejoin="round">
  <path d="M121.2,181.9 H141.6" stroke-width="1.8"/>
  <path d="M128.2,181.5 V179.2 H135 V181.5" stroke-width="1.7"/>
  <path d="M124,182.5 L125,198.7 H138 L139,182.5" stroke-width="1.8"/>
  <path d="M129.3,185.4 L129.6,195.8 M131.6,185.4 V195.8 M134,185.4 L133.7,195.8" stroke-width="1"/>
 </g>
 <!-- extract -->
 <g stroke="#6e6e6e" stroke-width="2.1" fill="none">
  <path d="M156.9,179 V183.6 H172 V179"/>
  <path d="M156.9,200.1 V192.3 H166 L172,198 V200.1"/>
  <path d="M166,192.5 V196.5 H172" stroke-width="1.8"/>
 </g>
 <g fill="#6e6e6e"><rect x="155.9" y="186.9" width="1.9" height="2"/><rect x="159" y="186.9" width="1.9" height="2"/><rect x="162.1" y="186.9" width="1.9" height="2"/><rect x="165.2" y="186.9" width="1.9" height="2"/><rect x="168.3" y="186.9" width="1.9" height="2"/><rect x="171.2" y="186.9" width="1.9" height="2"/></g>
 <!-- rotate ccw/cw -->
 <g stroke="#6e6e6e" stroke-width="2" fill="none">
  <path d="M193.6,195.6 A8.9,8.9 0 1 1 204,197"/>
  <path d="M238.1,195.6 A8.9,8.9 0 1 0 227.7,197"/>
 </g>
 <path d="M188.1,195.8 L196.7,192.2 L195,198.6 Z" fill="#6e6e6e"/>
 <path d="M244,195.8 L235.5,192.2 L237.1,198.6 Z" fill="#6e6e6e"/>
 <!-- scrollbar arrows -->
 <path d="M335.5,230.5 L338.7,226.3 L342,230.5" fill="none" stroke="#444" stroke-width="1.6"/>
 <path d="M335.3,845.5 L338.7,849.7 L342,845.5" fill="none" stroke="#444" stroke-width="1.6"/>
 <!-- collapse triangle -->
 <path d="M360,493.4 L366,487.9 V498.8 Z" fill="#6e6e6e"/>
</svg>
</body></html>
